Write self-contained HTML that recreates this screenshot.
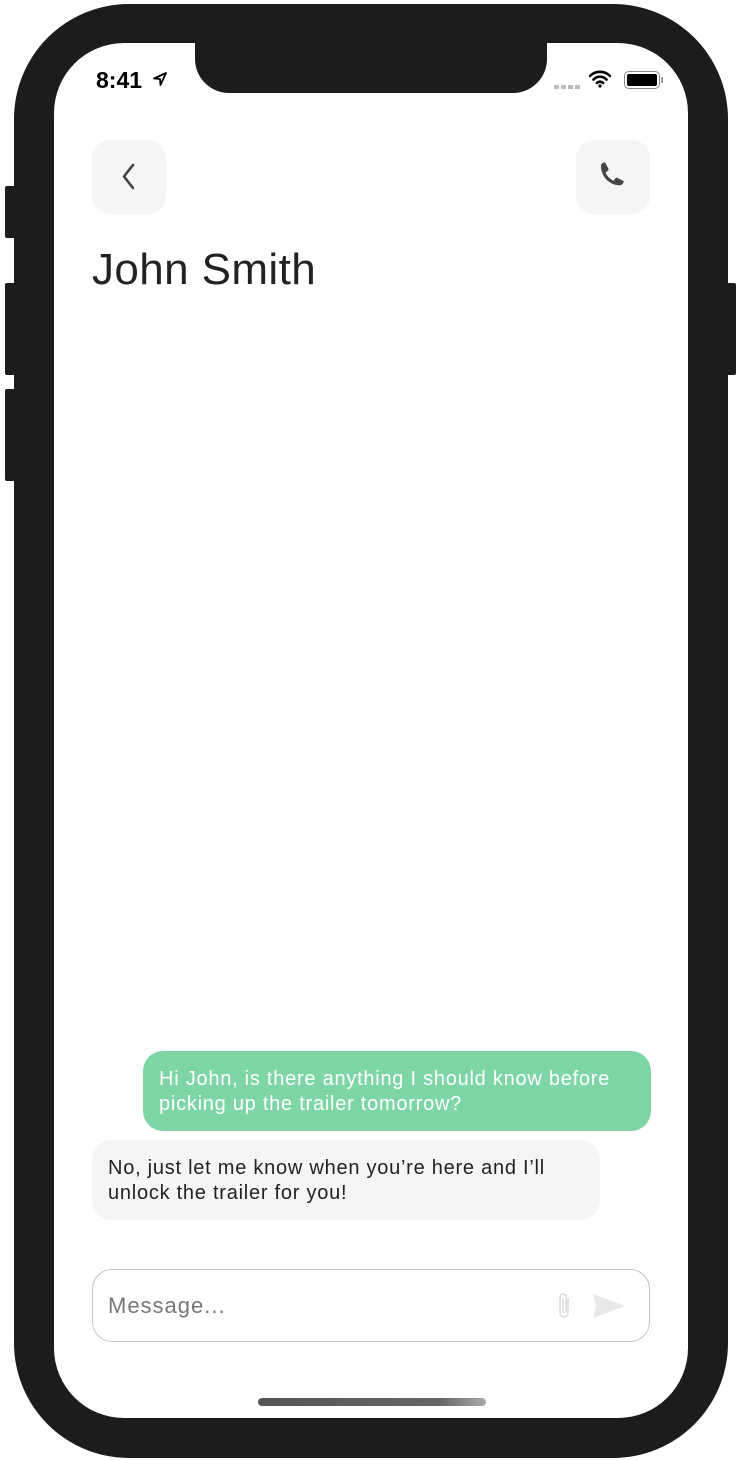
<!DOCTYPE html>
<html><head><meta charset="utf-8"><style>
*{margin:0;padding:0;box-sizing:border-box}
body{width:741px;height:1460px;background:#fff;position:relative;overflow:hidden;font-family:"Liberation Sans",sans-serif}
.frame{position:absolute;left:14px;top:4px;width:714px;height:1454px;background:#1c1c1c;border-radius:115px}
.btn{position:absolute;background:#1c1c1c;border-radius:2px}
.screen{position:absolute;left:54px;top:43px;width:634px;height:1375px;background:#fff;border-radius:70px;overflow:hidden}
.notch{position:absolute;left:141px;top:0;width:352px;height:50px;background:#1c1c1c;border-radius:0 0 34px 34px}
.time{position:absolute;left:42px;top:24px;font-size:23px;font-weight:bold;color:#000}
.sq{position:absolute;top:97px;width:74px;height:74px;background:#f5f5f5;border-radius:18px}
h1{position:absolute;left:38px;top:202px;font-size:44px;font-weight:normal;color:#222;letter-spacing:0.4px}
.b{position:absolute;font-size:20px;line-height:25px;padding:16px 16px 12px;border-radius:20px;letter-spacing:0.75px;white-space:nowrap}
.in{position:absolute;left:38px;top:1226px;width:558px;height:73px;border:1.5px solid #c4c4c4;border-radius:20px}
.in span{position:absolute;left:15px;top:23px;font-size:22px;color:#777;letter-spacing:1px}
.home{position:absolute;left:204px;top:1355px;width:228px;height:8px;border-radius:4px;background:linear-gradient(90deg,#555,#666 80%,#aaa)}
</style></head><body>
<div class="btn" style="left:5px;top:186px;width:12px;height:52px"></div>
<div class="btn" style="left:5px;top:283px;width:12px;height:92px"></div>
<div class="btn" style="left:5px;top:389px;width:12px;height:92px"></div>
<div class="btn" style="left:724px;top:283px;width:12px;height:92px"></div>
<div class="frame"></div>
<div class="screen">
<div class="notch"></div>
<div class="time">8:41</div>
<svg style="position:absolute;left:98px;top:28px" width="16" height="16" viewBox="0 0 16 16"><path d="M14 2L2 7.5l6 .5.5 6z" fill="none" stroke="#000" stroke-width="1.8" stroke-linejoin="round"/></svg>
<div style="position:absolute;left:500px;top:42px;width:28px;height:4px;background:repeating-linear-gradient(90deg,#bbb 0 5px,transparent 5px 7px)"></div>
<svg style="position:absolute;left:535px;top:27px" width="22" height="18" viewBox="0 0 22 18"><path d="M1 6a14 14 0 0 1 20 0M4.5 9.5a9 9 0 0 1 13 0M8 13a4 4 0 0 1 6 0" fill="none" stroke="#000" stroke-width="2.6" stroke-linecap="round"/><circle cx="11" cy="16" r="1.6"/></svg>
<div style="position:absolute;left:570px;top:28px;width:36px;height:18px;border:1.5px solid #888;border-radius:5px;padding:2px"><div style="width:100%;height:100%;background:#000;border-radius:2px"></div></div>
<div style="position:absolute;left:607px;top:34px;width:2px;height:6px;background:#999;border-radius:1px"></div>
<div class="sq" style="left:38px"><svg width="74" height="74" viewBox="0 0 74 74"><path d="M41 25L32 36.5 41 48" fill="none" stroke="#444" stroke-width="2.6" stroke-linecap="round" stroke-linejoin="round"/></svg></div>
<div class="sq" style="left:522px"><svg width="74" height="74" viewBox="0 0 74 74"><path d="M25 26c0-2.2 2.2-3.6 4-3.6l3.4 6.3c.4.9 0 1.6-.7 2.2l-2.2 1.8c1.8 3.4 4.5 6.3 8 8l1.8-2.2c.5-.7 1.4-1 2.2-.6l6.3 3.4c0 1.8-2.2 4-3.6 4C34 45.5 25 37 25 26z" fill="#444"/></svg></div>
<h1>John Smith</h1>
<div class="b" style="left:89px;top:1008px;width:508px;height:80px;background:#7ed6a6;color:#fff">Hi John, is there anything I should know before<br>picking up the trailer tomorrow?</div>
<div class="b" style="left:38px;top:1097px;width:508px;height:80px;background:#f5f5f5;color:#222">No, just let me know when you’re here and I’ll<br>unlock the trailer for you!</div>
<div class="in"><span>Message...</span>
<svg style="position:absolute;left:460px;top:20px" width="24" height="32" viewBox="0 0 24 32"><path d="M15 8v15a4 4 0 0 1-8 0V7a3 3 0 0 1 6 0v14a1.5 1.5 0 0 1-3 0V9" fill="none" stroke="#e2e2e2" stroke-width="2"/></svg>
<svg style="position:absolute;left:498px;top:22px" width="36" height="28" viewBox="0 0 36 28"><path d="M2 2L34 14 2 26l3-12z" fill="#e8e8e8"/></svg>
</div>
<div class="home"></div>
</div>
</body></html>
